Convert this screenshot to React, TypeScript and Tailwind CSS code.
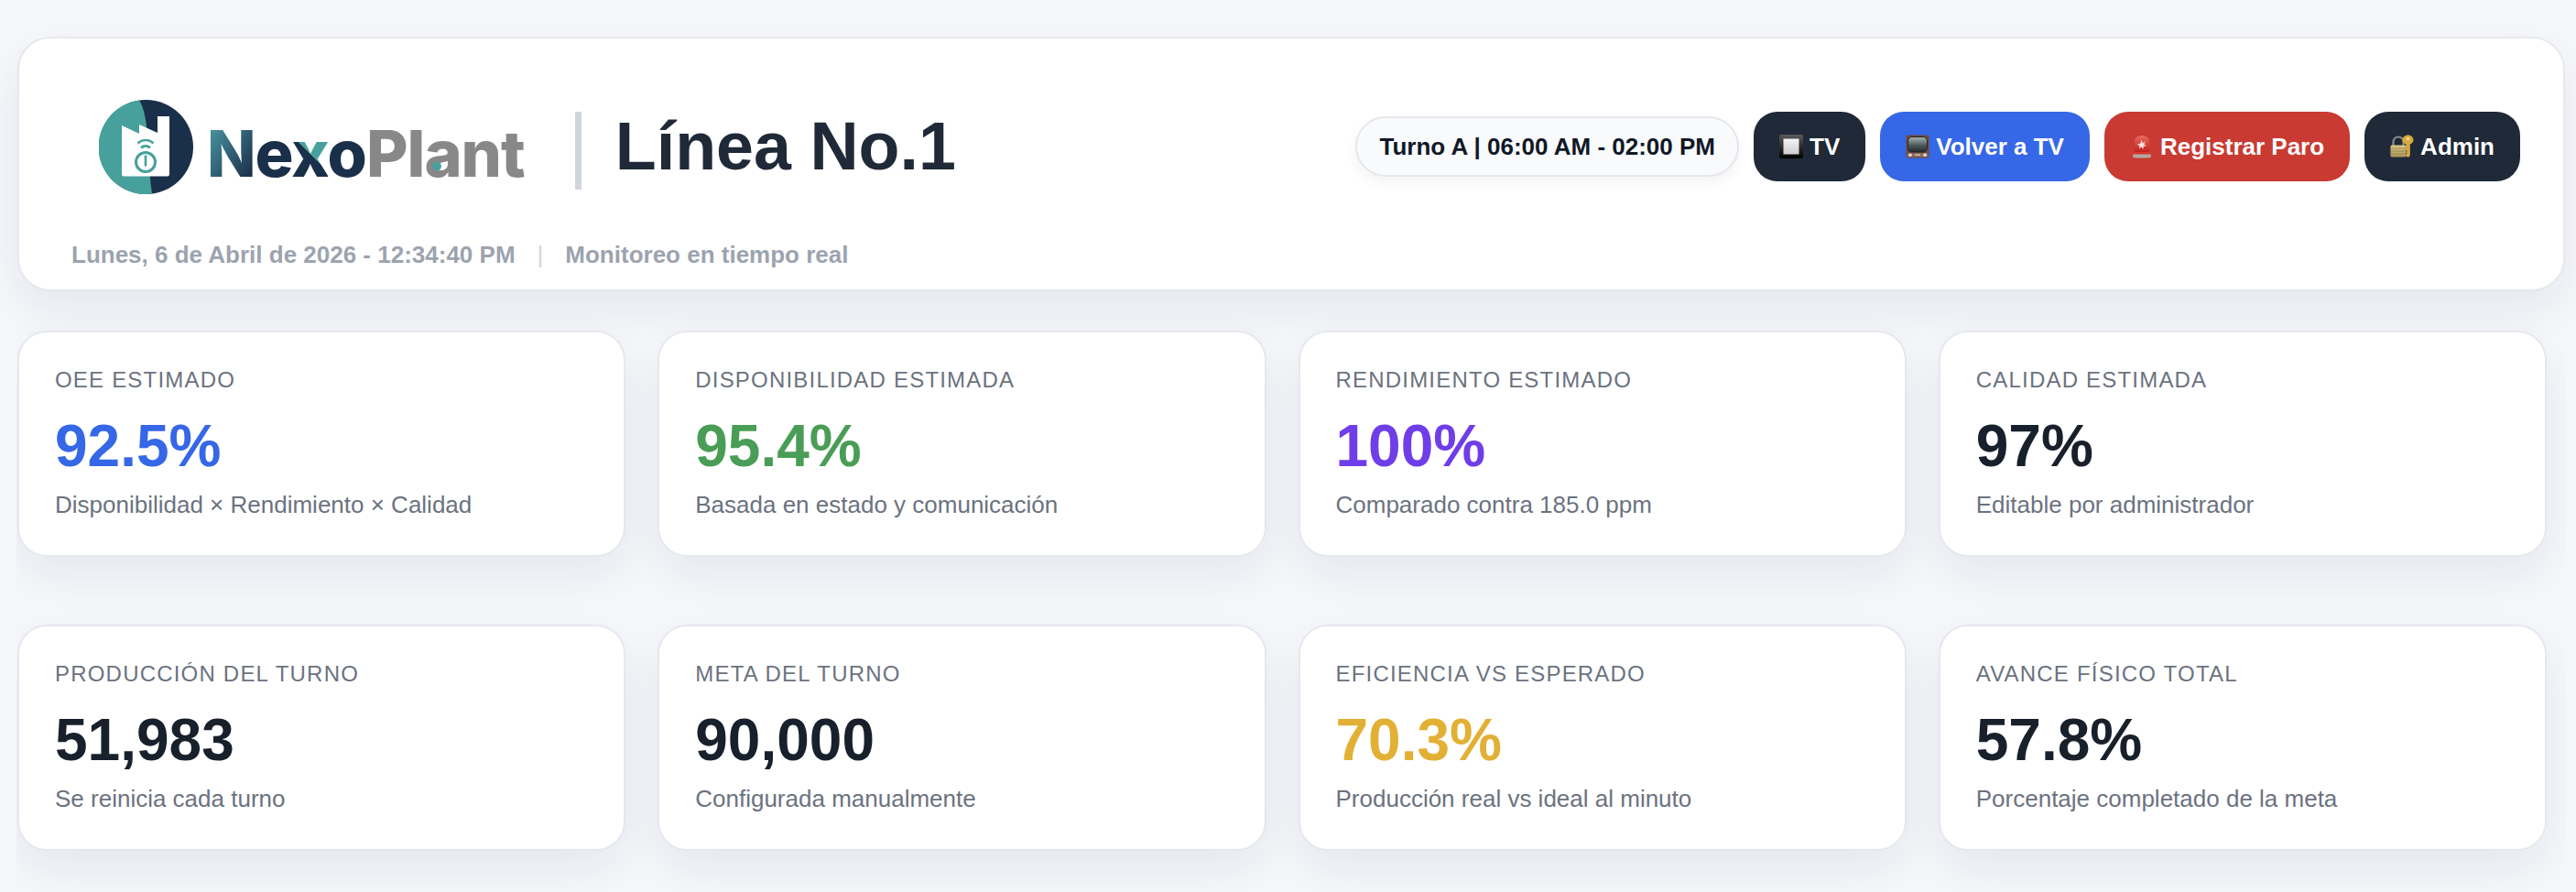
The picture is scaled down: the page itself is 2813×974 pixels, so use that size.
import { ReactNode } from "react";

const TvSquareIcon = () => (
    <svg viewBox="0 0 26 26" className="w-[26px] h-[26px] shrink-0">
        <defs>
            <linearGradient id="sq" x1="0" y1="0" x2="0" y2="1">
                <stop offset="0" stopColor="#f4f4f4" />
                <stop offset="1" stopColor="#cdcdcd" />
            </linearGradient>
            <linearGradient id="sqb" x1="0" y1="0" x2="0" y2="1">
                <stop offset="0" stopColor="#5a5a5a" />
                <stop offset="1" stopColor="#000000" />
            </linearGradient>
        </defs>
        <rect x="0" y="0" width="26" height="26" rx="2" fill="url(#sqb)" />
        <rect x="4.5" y="4.5" width="17" height="17" fill="url(#sq)" />
    </svg>
);

const TelevisionIcon = () => (
    <svg viewBox="0 0 26 26" className="w-[26px] h-[26px] shrink-0">
        <defs>
            <linearGradient id="scr" x1="0" y1="0" x2="0" y2="1">
                <stop offset="0" stopColor="#aab5b5" />
                <stop offset="0.55" stopColor="#4f5a5c" />
                <stop offset="1" stopColor="#1f2a2c" />
            </linearGradient>
        </defs>
        <rect x="0.5" y="0.5" width="25" height="25" rx="2.5" fill="#6f4a3e" />
        <rect x="2.5" y="2.5" width="21" height="16.5" rx="4.5" fill="url(#scr)" stroke="#2b2320" />
        <rect x="1.5" y="20" width="23" height="4.5" rx="1" fill="#8a6a5c" />
        <circle cx="5" cy="22.2" r="1.7" fill="#e8e2da" />
        <circle cx="21" cy="22.2" r="1.7" fill="#e8e2da" />
        <rect x="10" y="21.4" width="6" height="1.6" fill="#c9b8a8" />
    </svg>
);

const SirenIcon = () => (
    <svg viewBox="0 0 26 26" className="w-[26px] h-[26px] shrink-0">
        <defs>
            <linearGradient id="dome" x1="0" y1="0" x2="0" y2="1">
                <stop offset="0" stopColor="#e9695f" />
                <stop offset="1" stopColor="#c01f1a" />
            </linearGradient>
        </defs>
        <path d="M5 20 V8 C5 3 8.5 1 13 1 C17.5 1 21 3 21 8 V20 Z" fill="url(#dome)" />
        <path d="M12.5 6 L13.800 9.300 L17 7.500 L15.200 10.500 L18 12.500 L14.700 12.600 L14.300 16 L12.300 13.300 L9.800 15.500 L10.500 12.200 L7.500 10.800 L11 10 Z" fill="#fbe3e1" />
        <path d="M4 19.5 H22 L23 24 C23 25 21 25.500 13 25.500 C5 25.500 3 25 3 24 Z" fill="#b3a8a4" />
        <rect x="4" y="19" width="18" height="2.500" fill="#d8362e" />
    </svg>
);

const LockKeyIcon = () => (
    <svg viewBox="0 0 26 26" className="w-[26px] h-[26px] shrink-0">
        <defs>
            <linearGradient id="lock" x1="0" y1="0" x2="0" y2="1">
                <stop offset="0" stopColor="#dcc987" />
                <stop offset="1" stopColor="#a8955a" />
            </linearGradient>
        </defs>
        <path d="M3.5 13 V8.500 C3.5 4.500 6 2.500 9 2.500 C12 2.500 14.5 4.500 14.5 8.500 V13" fill="none" stroke="#8d8d8d" strokeWidth="2.200" />
        <rect x="0.5" y="11.500" width="17" height="13" rx="1.500" fill="url(#lock)" />
        <path d="M0.5 15 H17.5 M0.5 18 H17.5 M0.5 21 H17.5" stroke="#8f7f4c" strokeWidth="0.700" />
        <path d="M19.5 0.5 C22.800 0.5 25.500 3 25.500 5.800 C25.500 8.200 23.800 10 21.800 10.500 V23 L19.500 25 L17.300 23 V21.500 L18.800 20.500 L17.300 19.300 L18.800 18 L17.300 16.700 V10.500 C15 10 13.500 8.200 13.500 5.800 C13.500 3 16.200 0.5 19.500 0.5 Z" fill="#dba93f" />
        <circle cx="19.5" cy="4.500" r="1.600" fill="#f6e3a5" />
    </svg>
);

const Logo = () => (
    <div className="flex items-center">
        <svg viewBox="108 108 103 103" className="w-[103px] h-[103px] shrink-0">
            <circle cx="159.5" cy="159.5" r="51.5" fill="#1a2f49" />
            <path d="M152 108.500 C164 128 160 165 166 210.600 A51.5 51.5 0 1 1 152 108.500 Z" fill="#47a09b" />
            <path d="M133 136 L152 145 V135 L172 144 V126 H185 V189 Q185 191.500 182.500 191.500 H135.500 Q133 191.500 133 189 Z" fill="#ffffff" />
            <circle cx="159" cy="176" r="10.500" fill="none" stroke="#47a09b" strokeWidth="3" />
            <path d="M159 168 V181" stroke="#ffffff" strokeWidth="7" />
            <path d="M159 168.500 V180.500" stroke="#47a09b" strokeWidth="2.600" />
            <path d="M154 160.500 A7 7 0 0 1 164 160.500" fill="none" stroke="#47a09b" strokeWidth="2.600" />
            <path d="M150.500 155.500 A12 12 0 0 1 167.500 155.500" fill="none" stroke="#47a09b" strokeWidth="2.600" />
        </svg>
        <div className="relative ml-[15px] pt-[16px] font-['Inter',sans-serif] font-extrabold text-[70px] leading-[88px] tracking-[-1px] whitespace-nowrap text-[#888888]">
            <span className="bg-[linear-gradient(125deg,#4fa5b0,#1a2f49_85%)] bg-clip-text text-transparent">N</span>
            <span className="text-[#1a2f49]">e</span>
            <span className="bg-[linear-gradient(45deg,#1a2f49_50%,#47a09b_50%)] bg-clip-text text-transparent">x</span>
            <span className="text-[#1a2f49]">o</span>
            <span>Plant</span>
            <span className="absolute left-[246px] top-[69px] w-[10px] h-[9px] rounded-full bg-[#47a09b]"></span>
        </div>
    </div>
);

const ActionButton = ({ icon, label, color }: { icon: ReactNode; label: string; color: string }) => (
    <a href="#" className={`flex items-center gap-[7px] h-[76px] px-[28px] rounded-[26px] text-white font-bold text-[26px] whitespace-nowrap ${color}`}>
        {icon}
        <span>{label}</span>
    </a>
);

type Kpi = { label: string; value: string; note: string; color: string };

const kpis: Kpi[] = [
    { label: "OEE ESTIMADO", value: "92.5%", note: "Disponibilidad × Rendimiento × Calidad", color: "text-[#3667e6]" },
    { label: "DISPONIBILIDAD ESTIMADA", value: "95.4%", note: "Basada en estado y comunicación", color: "text-[#4a9d56]" },
    { label: "RENDIMIENTO ESTIMADO", value: "100%", note: "Comparado contra 185.0 ppm", color: "text-[#6f3ee8]" },
    { label: "CALIDAD ESTIMADA", value: "97%", note: "Editable por administrador", color: "text-[#18202b]" },
    { label: "PRODUCCIÓN DEL TURNO", value: "51,983", note: "Se reinicia cada turno", color: "text-[#18202b]" },
    { label: "META DEL TURNO", value: "90,000", note: "Configurada manualmente", color: "text-[#18202b]" },
    { label: "EFICIENCIA VS ESPERADO", value: "70.3%", note: "Producción real vs ideal al minuto", color: "text-[#e2b035]" },
    { label: "AVANCE FÍSICO TOTAL", value: "57.8%", note: "Porcentaje completado de la meta", color: "text-[#18202b]" },
];

const KpiCard = ({ label, value, note, color }: Kpi) => (
    <div className="bg-white border-2 border-[#e6e8ee] rounded-[32px] pt-[36px] pb-[39px] px-[39px] shadow-[0_20px_50px_rgba(15,23,42,0.07)]">
        <p className="text-[24px] leading-[32px] tracking-[1.2px] text-[#6b7280]">{label}</p>
        <p className={`mt-[20px] text-[64px] leading-[72px] font-bold ${color}`}>{value}</p>
        <p className="mt-[12px] text-[26px] leading-[32px] text-[#6b7280]">{note}</p>
    </div>
);

export default function App() {
    return (
        <div className="h-screen overflow-hidden bg-[#f5f7fb] pt-[40px] font-['Liberation_Sans',Arial,sans-serif]">
            {/* Header */}
            <header className="ml-[19px] w-[2782px] bg-white border-2 border-[#e6e8ee] rounded-[36px] pl-[57px] pr-[47px] pt-[66px] pb-[22px] shadow-[0_20px_50px_rgba(15,23,42,0.07)]">
                <div className="flex items-center justify-between">
                    <div className="flex items-center pl-[30px]">
                        <Logo />
                        <div className="ml-[55px] mt-[8px] w-[7px] h-[85px] bg-[#d1d5de]"></div>
                        <h1 className="ml-[37px] text-[73.6px] leading-[80px] font-bold text-[#1f2937]">Línea No.1</h1>
                    </div>
                    <div className="flex items-center gap-[16px]">
                        <div className="flex items-center h-[66px] px-[24px] rounded-full bg-[#f8fafc] border-2 border-[#e5e7eb] shadow-[0_6px_14px_rgba(15,23,42,0.05)] font-bold text-[26px] text-[#111827] whitespace-nowrap">
                            Turno A | 06:00 AM - 02:00 PM
                        </div>
                        <ActionButton icon={<TvSquareIcon />} label="TV" color="bg-[#1f2937]" />
                        <ActionButton icon={<TelevisionIcon />} label="Volver a TV" color="bg-[#3667e6]" />
                        <ActionButton icon={<SirenIcon />} label="Registrar Paro" color="bg-[#c93a32]" />
                        <ActionButton icon={<LockKeyIcon />} label="Admin" color="bg-[#1f2937]" />
                    </div>
                </div>
                <div className="flex items-center mt-[50px] text-[26px] leading-[32px] font-bold text-[#9ca3af]">
                    <span>Lunes, 6 de Abril de 2026 - 12:34:40 PM</span>
                    <span className="mx-[24px] font-normal text-[#d1d5db]">|</span>
                    <span>Monitoreo en tiempo real</span>
                </div>
            </header>

            {/* KPI cards */}
            <div className="mt-[43px] ml-[18px] w-[2784px] pl-[1px] overflow-x-clip">
                <div className="grid grid-cols-4 w-[2762px] gap-x-[35px] gap-y-[74px]">
                    {kpis.map((kpi) => (
                        <KpiCard key={kpi.label} {...kpi} />
                    ))}
                </div>
            </div>
        </div>
    );
}
